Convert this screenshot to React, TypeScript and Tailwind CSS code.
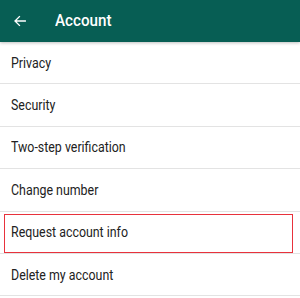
import React from "react";

const items = [
  "Privacy",
  "Security",
  "Two-step verification",
  "Change number",
  "Request account info",
  "Delete my account",
];

export default function App() {
  return (
    <div
      className="w-[300px] h-[298px] bg-white overflow-hidden"
      style={{ fontFamily: "Roboto, 'Noto Sans', sans-serif" }}
    >
      <div className="relative z-10 h-[42px] bg-[#075e54] flex items-center shadow-[0_1px_3px_rgba(0,0,0,0.25)]">
        <svg
          width="14"
          height="14"
          viewBox="0 0 24 24"
          className="ml-[13px]"
          fill="none"
          stroke="white"
          strokeWidth="2.4"
          strokeLinecap="square"
        >
          <path d="M21 12H4M11 4.5L3.5 12L11 19.5" />
        </svg>
        <span className="ml-[28px] text-white text-[16.5px] font-medium scale-x-[0.92] origin-left inline-block">
          Account
        </span>
      </div>
      <div className="flex flex-col">
        {items.map((t) => (
          <div
            key={t}
            className="relative h-[42.4px] flex items-center border-b border-[#e3e3e3] pl-[11px] text-[14px] text-[#222]"
          >
            {t === "Request account info" && (
              <div className="absolute left-[4px] right-[7px] top-[2px] bottom-[0px] border-[1.5px] border-[#e8323c]" />
            )}
            <span className="relative inline-block scale-x-[0.885] origin-left pt-[1px]">{t}</span>
          </div>
        ))}
      </div>
    </div>
  );
}
